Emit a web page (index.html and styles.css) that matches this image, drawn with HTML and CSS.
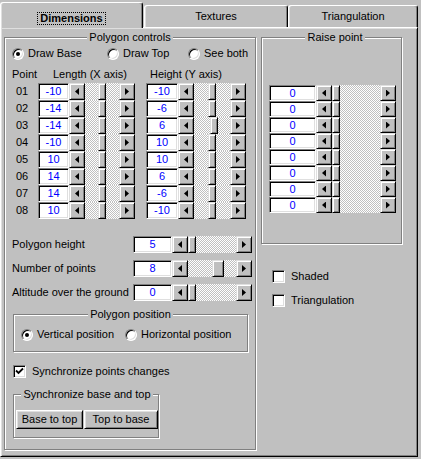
FILE: index.html
```html
<!DOCTYPE html>
<html>
<head>
<meta charset="utf-8">
<title>Dimensions</title>
<link rel="stylesheet" href="styles.css">
</head>
<body>
<div class="dialog">
  <div class="tabs">
    <div class="tab active"><span class="focus">Dimensions</span></div>
    <div class="tab tab-tex">Textures</div>
    <div class="tab tab-tri">Triangulation</div>
  </div>
  <div class="panel">
    <fieldset class="group poly">
      <legend>Polygon controls</legend>
      <div class="radios">
        <label class="opt opt-base"><span class="radio on"></span>Draw Base</label>
        <label class="opt opt-top"><span class="radio"></span>Draw Top</label>
        <label class="opt"><span class="radio"></span>See both</label>
      </div>
      <div class="heads">
        <span class="h-point">Point</span>
        <span class="h-len">Length (X axis)</span>
        <span>Height (Y axis)</span>
      </div>
      <div class="points">
        <div class="prow"><span class="pnum">01</span><span class="edit">-10</span><div class="scroll"><span class="sbtn"><i class="arr-l"></i></span><span class="track"><span class="thumb" style="margin-left:13px"></span></span><span class="sbtn"><i class="arr-r"></i></span></div><span class="edit e-hei">-10</span><div class="scroll"><span class="sbtn"><i class="arr-l"></i></span><span class="track"><span class="thumb" style="margin-left:14px"></span></span><span class="sbtn"><i class="arr-r"></i></span></div></div>
        <div class="prow"><span class="pnum">02</span><span class="edit">-14</span><div class="scroll"><span class="sbtn"><i class="arr-l"></i></span><span class="track"><span class="thumb" style="margin-left:13px"></span></span><span class="sbtn"><i class="arr-r"></i></span></div><span class="edit e-hei">-6</span><div class="scroll"><span class="sbtn"><i class="arr-l"></i></span><span class="track"><span class="thumb" style="margin-left:14px"></span></span><span class="sbtn"><i class="arr-r"></i></span></div></div>
        <div class="prow"><span class="pnum">03</span><span class="edit">-14</span><div class="scroll"><span class="sbtn"><i class="arr-l"></i></span><span class="track"><span class="thumb" style="margin-left:13px"></span></span><span class="sbtn"><i class="arr-r"></i></span></div><span class="edit e-hei">6</span><div class="scroll"><span class="sbtn"><i class="arr-l"></i></span><span class="track"><span class="thumb" style="margin-left:16px"></span></span><span class="sbtn"><i class="arr-r"></i></span></div></div>
        <div class="prow"><span class="pnum">04</span><span class="edit">-10</span><div class="scroll"><span class="sbtn"><i class="arr-l"></i></span><span class="track"><span class="thumb" style="margin-left:13px"></span></span><span class="sbtn"><i class="arr-r"></i></span></div><span class="edit e-hei">10</span><div class="scroll"><span class="sbtn"><i class="arr-l"></i></span><span class="track"><span class="thumb" style="margin-left:14px"></span></span><span class="sbtn"><i class="arr-r"></i></span></div></div>
        <div class="prow"><span class="pnum">05</span><span class="edit">10</span><div class="scroll"><span class="sbtn"><i class="arr-l"></i></span><span class="track"><span class="thumb" style="margin-left:13px"></span></span><span class="sbtn"><i class="arr-r"></i></span></div><span class="edit e-hei">10</span><div class="scroll"><span class="sbtn"><i class="arr-l"></i></span><span class="track"><span class="thumb" style="margin-left:14px"></span></span><span class="sbtn"><i class="arr-r"></i></span></div></div>
        <div class="prow"><span class="pnum">06</span><span class="edit">14</span><div class="scroll"><span class="sbtn"><i class="arr-l"></i></span><span class="track"><span class="thumb" style="margin-left:13px"></span></span><span class="sbtn"><i class="arr-r"></i></span></div><span class="edit e-hei">6</span><div class="scroll"><span class="sbtn"><i class="arr-l"></i></span><span class="track"><span class="thumb" style="margin-left:14px"></span></span><span class="sbtn"><i class="arr-r"></i></span></div></div>
        <div class="prow"><span class="pnum">07</span><span class="edit">14</span><div class="scroll"><span class="sbtn"><i class="arr-l"></i></span><span class="track"><span class="thumb" style="margin-left:13px"></span></span><span class="sbtn"><i class="arr-r"></i></span></div><span class="edit e-hei">-6</span><div class="scroll"><span class="sbtn"><i class="arr-l"></i></span><span class="track"><span class="thumb" style="margin-left:14px"></span></span><span class="sbtn"><i class="arr-r"></i></span></div></div>
        <div class="prow"><span class="pnum">08</span><span class="edit">10</span><div class="scroll"><span class="sbtn"><i class="arr-l"></i></span><span class="track"><span class="thumb" style="margin-left:13px"></span></span><span class="sbtn"><i class="arr-r"></i></span></div><span class="edit e-hei">-10</span><div class="scroll"><span class="sbtn"><i class="arr-l"></i></span><span class="track"><span class="thumb" style="margin-left:14px"></span></span><span class="sbtn"><i class="arr-r"></i></span></div></div>
      </div>
      <div class="params">
        <div class="param"><span class="param-label">Polygon height</span><span class="edit">5</span><div class="scroll"><span class="sbtn"><i class="arr-l"></i></span><span class="track"><span class="thumb"></span></span><span class="sbtn"><i class="arr-r"></i></span></div></div>
        <div class="param"><span class="param-label">Number of points</span><span class="edit">8</span><div class="scroll"><span class="sbtn"><i class="arr-l"></i></span><span class="track"><span class="thumb thumb-wide" style="margin-left:24px"></span></span><span class="sbtn"><i class="arr-r"></i></span></div></div>
        <div class="param"><span class="param-label">Altitude over the ground</span><span class="edit">0</span><div class="scroll"><span class="sbtn"><i class="arr-l"></i></span><span class="track"><span class="thumb"></span></span><span class="sbtn"><i class="arr-r"></i></span></div></div>
      </div>
      <fieldset class="group pos">
        <legend>Polygon position</legend>
        <div class="pos-radios">
          <label class="opt opt-vert"><span class="radio on"></span>Vertical position</label>
          <label class="opt"><span class="radio"></span>Horizontal position</label>
        </div>
      </fieldset>
      <label class="check sync-check"><span class="box"><svg width="9" height="9" viewBox="0 0 9 9"><path d="M1 3.5 L3.5 6 L8 1.5" fill="none" stroke="#000" stroke-width="1.8"/></svg></span>Synchronize points changes</label>
      <fieldset class="group sync">
        <legend>Synchronize base and top</legend>
        <div class="btns">
          <button class="btn btn-b2t">Base to top</button>
          <button class="btn btn-t2b">Top to base</button>
        </div>
      </fieldset>
    </fieldset>
    <div class="side">
      <fieldset class="group raise">
        <legend>Raise point</legend>
        <div class="rrows">
          <div class="rrow"><span class="edit">0</span><div class="scroll"><span class="sbtn"><i class="arr-l"></i></span><span class="track"><span class="thumb"></span></span><span class="sbtn"><i class="arr-r"></i></span></div></div>
          <div class="rrow"><span class="edit">0</span><div class="scroll"><span class="sbtn"><i class="arr-l"></i></span><span class="track"><span class="thumb"></span></span><span class="sbtn"><i class="arr-r"></i></span></div></div>
          <div class="rrow"><span class="edit">0</span><div class="scroll"><span class="sbtn"><i class="arr-l"></i></span><span class="track"><span class="thumb"></span></span><span class="sbtn"><i class="arr-r"></i></span></div></div>
          <div class="rrow"><span class="edit">0</span><div class="scroll"><span class="sbtn"><i class="arr-l"></i></span><span class="track"><span class="thumb"></span></span><span class="sbtn"><i class="arr-r"></i></span></div></div>
          <div class="rrow"><span class="edit">0</span><div class="scroll"><span class="sbtn"><i class="arr-l"></i></span><span class="track"><span class="thumb"></span></span><span class="sbtn"><i class="arr-r"></i></span></div></div>
          <div class="rrow"><span class="edit">0</span><div class="scroll"><span class="sbtn"><i class="arr-l"></i></span><span class="track"><span class="thumb"></span></span><span class="sbtn"><i class="arr-r"></i></span></div></div>
          <div class="rrow"><span class="edit">0</span><div class="scroll"><span class="sbtn"><i class="arr-l"></i></span><span class="track"><span class="thumb"></span></span><span class="sbtn"><i class="arr-r"></i></span></div></div>
          <div class="rrow"><span class="edit">0</span><div class="scroll"><span class="sbtn"><i class="arr-l"></i></span><span class="track"><span class="thumb"></span></span><span class="sbtn"><i class="arr-r"></i></span></div></div>
        </div>
      </fieldset>
      <div class="side-checks">
        <label class="check"><span class="box"></span>Shaded</label>
        <label class="check check-tri"><span class="box"></span>Triangulation</label>
      </div>
    </div>
  </div>
</div>
</body>
</html>
```

FILE: styles.css
```css
* { box-sizing: border-box; }
html, body { margin: 0; padding: 0; background: #c0c0c0; }
body {
  width: 421px; height: 459px; overflow: hidden;
  font-family: "Liberation Sans", Arial, sans-serif;
  font-size: 11px; line-height: 13px; color: #000;
}
.dialog { width: 418px; padding-top: 2px; }

/* tabs */
.tabs { display: flex; align-items: flex-end; height: 25px; }
.tab {
  height: 22px; display: flex; align-items: center; justify-content: center;
  background: #c0c0c0;
  border-top: 1px solid #fff; border-left: 1px solid #fff; border-right: 1px solid #000;
  border-radius: 3px 3px 0 0;
  box-shadow: inset 1px 0 0 #dfdfdf, inset -1px 0 0 #808080;
}
.tab.active {
  width: 143px; height: 26px; margin-bottom: -1px; padding-top: 5px;
  position: relative; z-index: 1; font-weight: bold;
}
.tab-tex { width: 144px; margin-left: 1px; }
.tab-tri { width: 130px; }
.focus { display: inline-block; border: 1px dotted #000; padding: 0 2px; line-height: 11px; }

/* panel */
.panel {
  height: 430px; display: flex; align-items: flex-start; gap: 5px;
  padding: 3px 0 0 3px;
  border: 1px solid; border-color: #fff #000 #000 #fff;
  box-shadow: inset 1px 1px 0 #dfdfdf, inset -1px -1px 0 #808080;
}

/* group boxes */
.group {
  margin: 0; padding: 0; min-width: 0;
  border: 1px solid #808080;
  box-shadow: 1px 1px 0 #fff, inset 1px 1px 0 #fff;
}
.group > legend {
  margin: 0 auto; padding: 0 2px; background: #c0c0c0; line-height: 13px;
}
.poly { width: 252px; height: 419px; }
.side { width: 141px; }
.raise { width: 141px; height: 213px; padding: 41px 0 0 7px; }

/* radios / checks */
.opt, .check { display: flex; align-items: center; height: 13px; white-space: nowrap; }
.radio {
  width: 12px; height: 12px; flex: none; margin-right: 4px;
  border-radius: 50%; background: #fff;
  border: 1px solid; border-color: #808080 #fff #fff #808080;
  box-shadow: inset 1px 1px 0 #000, inset -1px -1px 0 #dfdfdf;
  display: flex; align-items: center; justify-content: center;
}
.radio.on::after { content: ""; width: 4px; height: 4px; border-radius: 50%; background: #000; }
.box {
  width: 13px; height: 13px; flex: none; margin-right: 6px; background: #fff;
  border: 1px solid; border-color: #808080 #fff #fff #808080;
  box-shadow: inset 1px 1px 0 #000, inset -1px -1px 0 #dfdfdf;
  display: flex; align-items: center; justify-content: center;
}
.box svg { display: block; }

.radios { display: flex; margin-top: 3px; padding-left: 7px; }
.opt-base { width: 95px; }
.opt-top { width: 81px; }

.heads { display: flex; margin-top: 8px; padding-left: 7px; height: 13px; }
.h-point { width: 41px; }
.h-len { width: 97px; }

/* point rows */
.points { margin-top: 2px; padding-left: 11px; }
.prow { display: grid; grid-template-columns: 22px 31px 66px 43px 68px; height: 17px; }
.pnum { align-self: center; }
.e-hei { margin-left: 11px; }

.edit {
  display: flex; align-items: center; justify-content: center;
  background: #fff; color: #00f;
  border: 1px solid; border-color: #808080 #fff #fff #808080;
  box-shadow: inset 1px 1px 0 #000, inset -1px -1px 0 #dfdfdf;
}

/* scrollbars */
.scroll { display: flex; }
.sbtn, .thumb {
  flex: none; background: #c0c0c0;
  border: 1px solid; border-color: #dfdfdf #000 #000 #dfdfdf;
  box-shadow: inset 1px 1px 0 #fff, inset -1px -1px 0 #808080;
}
.sbtn { width: 16px; display: flex; align-items: center; justify-content: center; }
.thumb { width: 8px; }
.thumb-wide { width: 12px; }
.track {
  flex: 1; display: flex;
  background: repeating-conic-gradient(#c0c0c0 0 25%, #fff 0 50%) 0 0 / 2px 2px;
}
.arr-l, .arr-r { width: 4px; height: 7px; background: #000; }
.arr-l { clip-path: polygon(100% 0, 0 50%, 100% 100%); }
.arr-r { clip-path: polygon(0 0, 100% 50%, 0 100%); }

/* parameter rows */
.params { margin-top: 17px; display: flex; flex-direction: column; gap: 7px; }
.param { display: flex; height: 17px; padding-left: 7px; }
.param-label { width: 121px; align-self: center; }
.param .edit { width: 39px; }
.param .scroll { width: 80px; }

/* polygon position */
.pos { width: 235px; height: 44px; margin: 7px 0 0 8px; }
.pos-radios { display: flex; padding: 7px 0 0 7px; }
.opt-vert { width: 104px; }

.sync-check { margin: 13px 0 0 8px; }

.sync { width: 146px; height: 50px; margin: 10px 0 0 8px; padding: 9px 0 0 2px; }
.btns { display: flex; gap: 1px; }
.btn {
  height: 19px; padding: 0; margin: 0;
  font: inherit; color: #000; background: #c0c0c0;
  border: 1px solid; border-color: #fff #000 #000 #fff;
  box-shadow: inset 1px 1px 0 #dfdfdf, inset -1px -1px 0 #808080;
}
.btn-b2t { width: 67px; }
.btn-t2b { width: 74px; }

/* raise rows */
.rrow { display: flex; height: 16px; }
.rrow .edit { width: 47px; }
.rrow .scroll { width: 80px; }

.side-checks { margin: 26px 0 0 11px; display: flex; flex-direction: column; gap: 11px; }
```
